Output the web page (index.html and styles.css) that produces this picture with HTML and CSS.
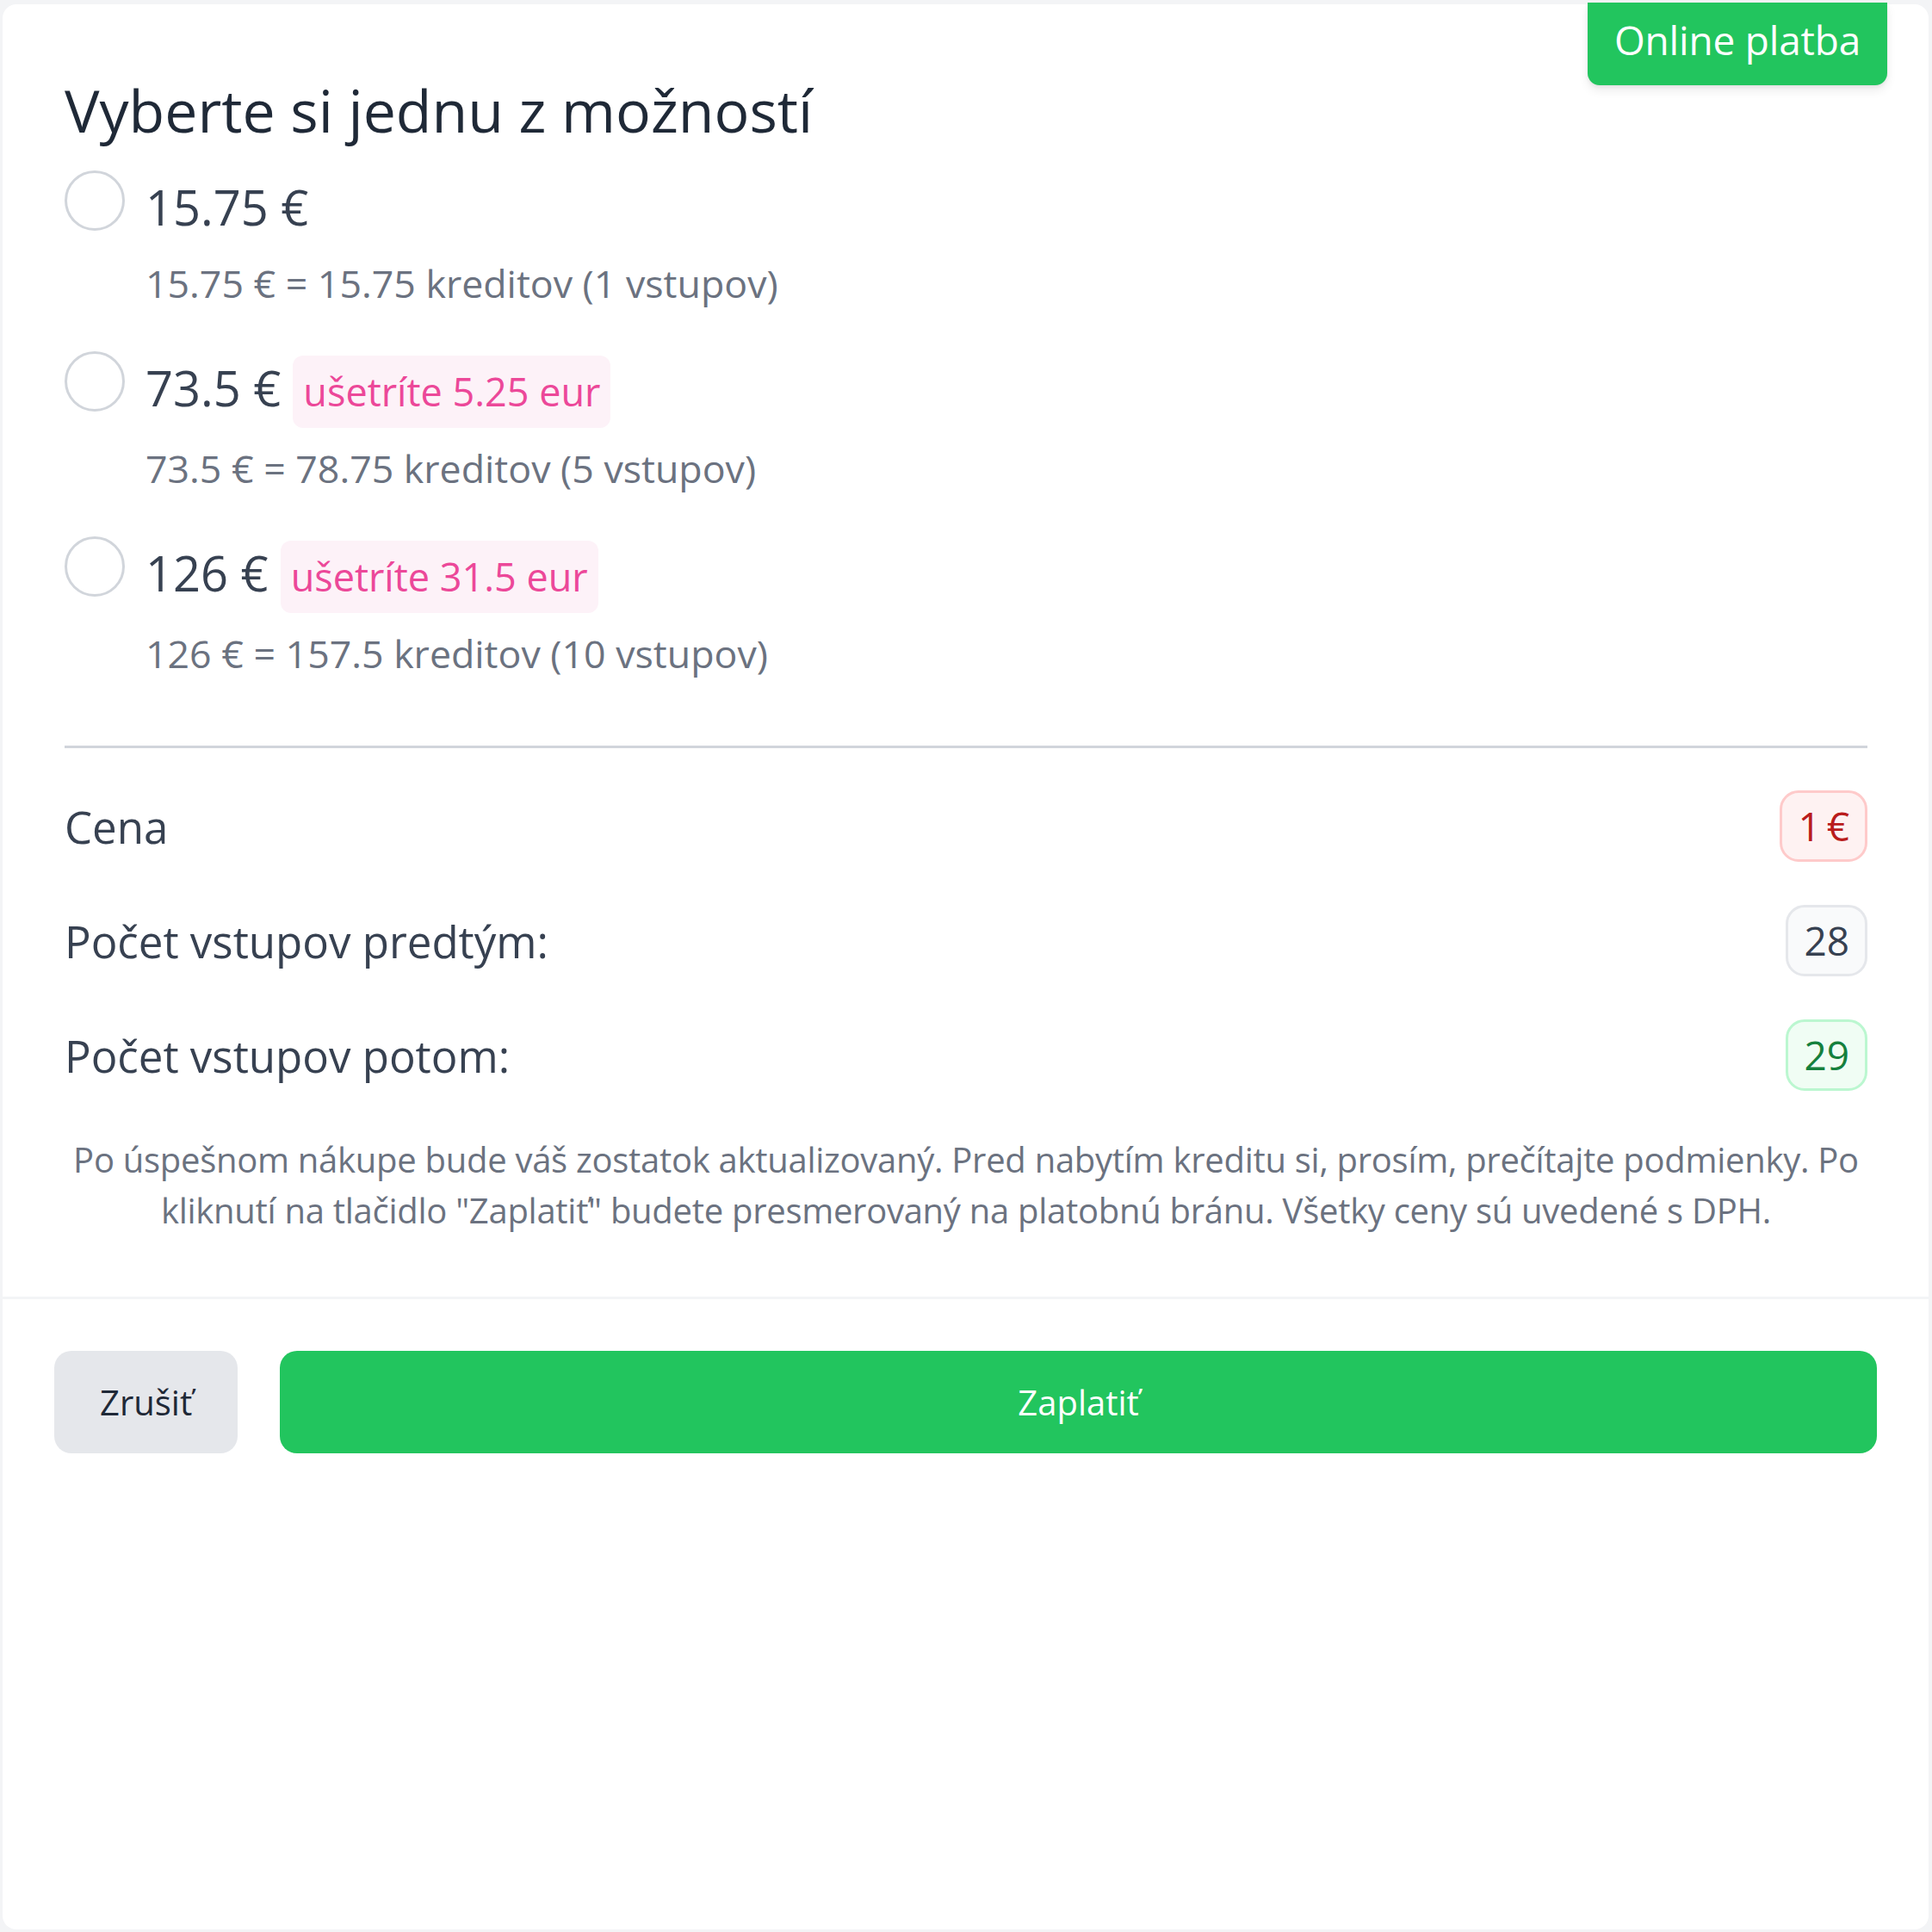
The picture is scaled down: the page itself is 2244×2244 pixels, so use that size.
FILE: index.html
```html
<!DOCTYPE html>
<html lang="sk">
<head>
<meta charset="utf-8">
<title>Online platba</title>
<link rel="stylesheet" href="styles.css">
</head>
<body>
<div class="card">
  <div class="tag">Online platba</div>
  <div class="content">
    <h2 class="title">Vyberte si jednu z možností</h2>
    <div class="options">
      <div class="option">
        <span class="radio"></span>
        <div class="option-body">
          <div class="price-line"><span class="price">15.75 €</span></div>
          <div class="sub">15.75 € = 15.75 kreditov (1 vstupov)</div>
        </div>
      </div>
      <div class="option">
        <span class="radio"></span>
        <div class="option-body">
          <div class="price-line"><span class="price">73.5 €</span><span class="save">ušetríte 5.25 eur</span></div>
          <div class="sub">73.5 € = 78.75 kreditov (5 vstupov)</div>
        </div>
      </div>
      <div class="option">
        <span class="radio"></span>
        <div class="option-body">
          <div class="price-line"><span class="price">126 €</span><span class="save">ušetríte 31.5 eur</span></div>
          <div class="sub">126 € = 157.5 kreditov (10 vstupov)</div>
        </div>
      </div>
    </div>
    <div class="divider"></div>
    <div class="summary">
      <div class="sum-row"><span class="sum-label">Cena</span><span class="pill pill-red">1 €</span></div>
      <div class="sum-row"><span class="sum-label">Počet vstupov predtým:</span><span class="pill pill-gray">28</span></div>
      <div class="sum-row"><span class="sum-label">Počet vstupov potom:</span><span class="pill pill-green">29</span></div>
    </div>
    <p class="note">Po úspešnom nákupe bude váš zostatok aktualizovaný. Pred nabytím kreditu si, prosím, prečítajte podmienky. Po kliknutí na tlačidlo "Zaplatiť" budete presmerovaný na platobnú bránu. Všetky ceny sú uvedené s DPH.</p>
  </div>
  <div class="footer">
    <button class="btn btn-cancel">Zrušiť</button>
    <button class="btn btn-pay">Zaplatiť</button>
  </div>
</div>
</body>
</html>
```
FILE: styles.css
```css
* { box-sizing: border-box; }
html, body { margin: 0; padding: 0; }
body {
  background: #f3f4f6;
  font-family: "Open Sans", "Noto Sans", sans-serif;
  color: #374151;
}
.card {
  position: relative;
  margin: 5px 4px 3px 3px;
  height: 2236px;
  background: #ffffff;
  border-radius: 16px;
  display: flex;
  flex-direction: column;
}
.tag {
  position: absolute;
  top: -2px;
  right: 48px;
  height: 96px;
  padding: 0 31px;
  background: #22c55e;
  color: #ffffff;
  font-size: 46px;
  letter-spacing: -0.2px;
  line-height: 86px;
  border-radius: 0 0 14px 14px;
  box-shadow: 0 6px 12px rgba(0,0,0,0.08), 0 2px 4px rgba(0,0,0,0.06);
}
.content {
  padding: 81px 71px 71px 72px;
}
.title {
  margin: 0;
  font-size: 68px;
  line-height: 84px;
  font-weight: 400;
  color: #1f2937;
}
.options {
  margin-top: 28px;
  display: flex;
  flex-direction: column;
  gap: 46px;
}
.option {
  display: flex;
  align-items: flex-start;
}
.radio {
  flex: none;
  width: 70px;
  height: 70px;
  border: 3px solid #d1d5db;
  border-radius: 50%;
  margin-right: 24px;
}
.price-line {
  font-size: 56px;
  line-height: 84px;
  color: #374151;
}
.save {
  display: inline-block;
  margin-left: 14px;
  height: 84px;
  padding: 0 12px;
  background: #fdf2f8;
  color: #ec4899;
  font-size: 45px;
  line-height: 84px;
  border-radius: 12px;
}
.sub {
  margin-top: 14px;
  font-size: 44.7px;
  line-height: 66px;
  color: #6b7280;
}
.divider {
  margin-top: 74px;
  height: 3px;
  background: #d1d5db;
}
.summary {
  margin-top: 49px;
  display: flex;
  flex-direction: column;
  gap: 50px;
}
.sum-row {
  display: flex;
  align-items: center;
  justify-content: space-between;
  height: 83px;
}
.sum-label {
  font-size: 51px;
  color: #374151;
}
.pill {
  height: 83px;
  padding: 0 18px;
  border: 3px solid;
  border-radius: 22px;
  font-size: 46px;
  line-height: 77px;
  word-spacing: -5px;
}
.pill-red { background: #fef2f2; border-color: #fecaca; color: #b91c1c; }
.pill-gray { background: #f9fafb; border-color: #e5e7eb; color: #374151; }
.pill-green { background: #f0fdf4; border-color: #bbf7d0; color: #15803d; }
.note {
  margin: 50px 0 0;
  text-align: center;
  font-size: 40px;
  letter-spacing: -0.28px;
  line-height: 59px;
  color: #6b7280;
}
.footer {
  border-top: 3px solid #f3f4f6;
  padding: 60px;
  display: flex;
  gap: 49px;
}
.btn {
  height: 119px;
  border: none;
  border-radius: 20px;
  font-family: inherit;
  font-size: 40px;
}
.btn-cancel {
  flex: none;
  padding: 0 53px;
  background: #e5e7eb;
  color: #1f2937;
}
.btn-pay {
  flex: 1;
  background: #22c55e;
  color: #ffffff;
}
```
